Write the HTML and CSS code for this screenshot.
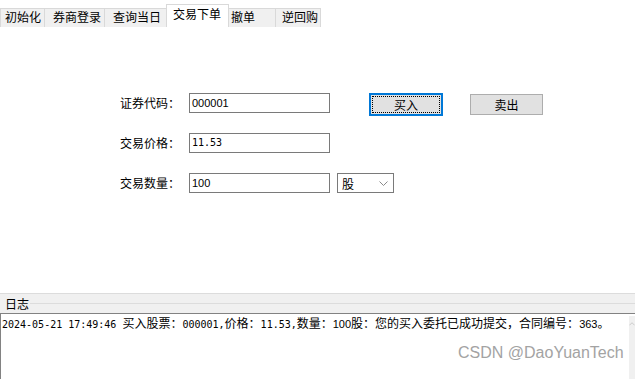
FILE: index.html
```html
<!DOCTYPE html>
<html lang="zh-CN">
<head>
  <meta charset="UTF-8">
  <title>交易下单</title>
  <link rel="stylesheet" href="styles.css">
</head>
<body>
  <div class="tabs">
    <div class="tab t1">初始化</div>
    <div class="tab t2">券商登录</div>
    <div class="tab t3">查询当日</div>
    <div class="tab t4 active">交易下单</div>
    <div class="tab t5">撤单</div>
    <div class="tab t6">逆回购</div>
  </div>

  <div class="page">
    <div class="form">
      <div class="row">
        <span class="label">证券代码：</span>
        <div class="input">000001</div>
        <button class="btn buy">买入</button>
        <button class="btn sell">卖出</button>
      </div>
      <div class="row">
        <span class="label">交易价格：</span>
        <div class="input mono">11.53</div>
      </div>
      <div class="row">
        <span class="label">交易数量：</span>
        <div class="input">100</div>
        <div class="combo">
          <span>股</span>
          <svg width="9" height="5" viewBox="0 0 9 5"><path d="M0.5 0.5 L4.5 4.5 L8.5 0.5" fill="none" stroke="#8a8a8a" stroke-width="1"/></svg>
        </div>
      </div>
    </div>
  </div>

  <div class="logbar">
    <span class="logtitle">日志</span>
    <span class="logline"></span>
  </div>
  <div class="logbox">
    <div class="logtext"><span class="mono">2024-05-21 17:49:46 </span>买入股票：<span class="mono">000001,</span>价格：<span class="mono">11.53,</span>数量：<span class="narrow">100</span>股：您的买入委托已成功提交，合同编号：<span class="narrow">363</span>。</div>
    <div class="scroll">
      <svg width="7" height="4" viewBox="0 0 7 4"><path d="M0.5 3.5 L3.5 0.5 L6.5 3.5" fill="none" stroke="#c4c4c4" stroke-width="1"/></svg>
    </div>
    <div class="watermark">CSDN @DaoYuanTech</div>
  </div>
</body>
</html>
```

FILE: styles.css
```css
html, body { margin: 0; padding: 0; }
body {
  width: 635px;
  height: 379px;
  background: #fff;
  font-family: "Noto Sans CJK SC", "Liberation Sans", sans-serif;
  font-size: 12px;
  color: #000;
  display: flex;
  flex-direction: column;
  overflow: hidden;
}
.mono { font-family: "DejaVu Sans Mono", monospace; font-size: 10px; }
.narrow { font-family: "Liberation Sans", sans-serif; font-size: 11px; }

/* tabs */
.tabs {
  height: 27px;
  display: flex;
  align-items: flex-end;
  flex: none;
}
.tab {
  box-sizing: border-box;
  height: 19px;
  line-height: 16px;
  background: #f0f0f0;
  border: 1px solid #d9d9d9;
  border-bottom: none;
  margin-right: -1px;
  white-space: nowrap;
}
.t1 { width: 45px; padding-left: 4px; }
.t2 { width: 61px; padding-left: 8px; }
.t3 { width: 63px; padding-left: 8px; }
.t4 { width: 63px; padding-left: 6px; }
.t5 { width: 48px; padding-left: 2px; }
.t6 { width: 46px; padding-left: 6px; }
.tab.active {
  height: 23px;
  background: #fff;
  padding-top: 1px;
  position: relative;
  z-index: 1;
}

/* form */
.page { flex: 1; }
.form {
  margin: 66px 0 0 120px;
  display: flex;
  flex-direction: column;
  gap: 20px;
}
.row {
  display: flex;
  align-items: flex-start;
  height: 20px;
}
.label {
  width: 69px;
  line-height: 20px;
}
.input {
  box-sizing: border-box;
  width: 141px;
  height: 20px;
  border: 1px solid #7a7a7a;
  padding-left: 2px;
  line-height: 18px;
  font-family: "Liberation Sans", sans-serif;
  font-size: 11px;
}
.input.mono { font-family: "DejaVu Sans Mono", monospace; font-size: 10px; }
.btn {
  box-sizing: border-box;
  font-family: "Noto Sans CJK SC", sans-serif;
  font-size: 12px;
  background: #e1e1e1;
  padding: 0;
  line-height: 16px;
}
.buy {
  width: 74px;
  height: 23px;
  margin-left: 39px;
  border: 2px solid #0078d7;
  outline: 1px dotted #000;
  outline-offset: -4px;
}
.sell {
  width: 73px;
  height: 21px;
  margin: 1px 0 0 27px;
  border: 1px solid #adadad;
}
.combo {
  box-sizing: border-box;
  width: 57px;
  height: 20px;
  margin-left: 7px;
  border: 1px solid #7a7a7a;
  display: flex;
  align-items: center;
  justify-content: space-between;
  padding: 0 5px 0 4px;
}

/* log */
.logbar {
  flex: none;
  height: 19px;
  background: #f0f0f0;
  border-top: 1px solid #dcdcdc;
  display: flex;
  align-items: center;
}
.logtitle {
  padding: 0 1px 0 5px;
  line-height: 16px;
}
.logline {
  flex: 1;
  height: 1px;
  background: #dcdcdc;
}
.logbox {
  flex: none;
  height: 65px;
  border-top: 1px solid #828282;
  border-left: 1px solid #828282;
  position: relative;
}
.logtext {
  padding: 1px 0 0 1px;
  line-height: 16px;
  white-space: nowrap;
}
.scroll {
  position: absolute;
  right: 0;
  top: 2px;
  bottom: 0;
  width: 6px;
  background: #f0f0f0;
  display: flex;
  justify-content: center;
  padding-top: 6px;
  box-sizing: border-box;
  overflow: hidden;
}
.watermark {
  position: absolute;
  left: 457px;
  top: 30px;
  font-family: "Liberation Sans", sans-serif;
  font-size: 16px;
  color: #a3a3a3;
}
```
